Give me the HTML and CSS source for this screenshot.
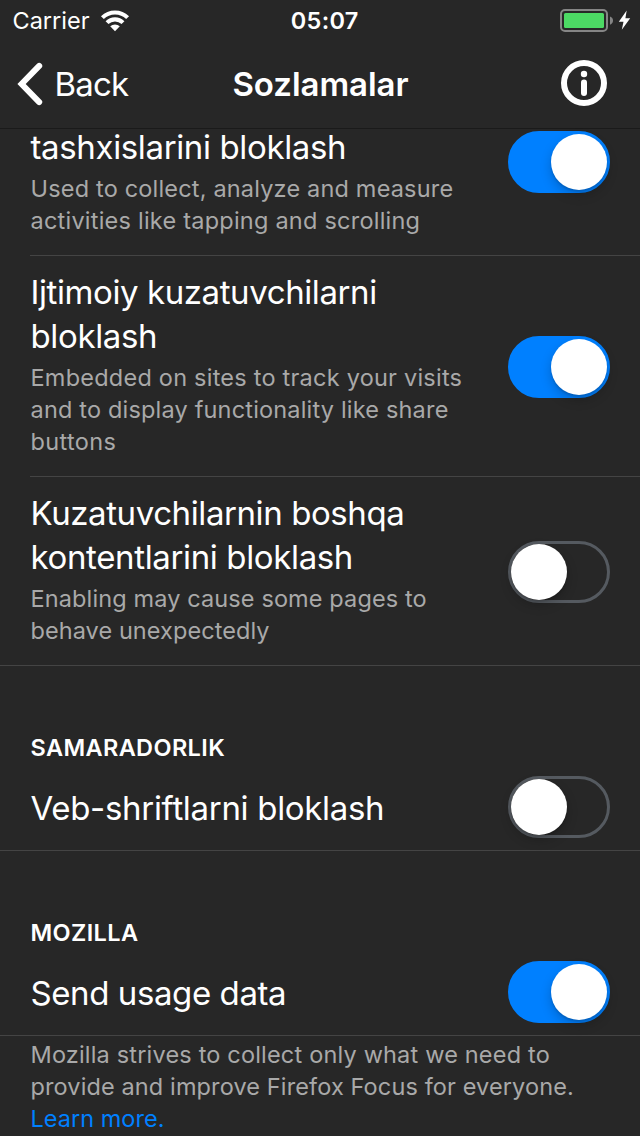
FILE: index.html
```html
<!DOCTYPE html>
<html lang="uz">
<head>
<meta charset="utf-8">
<title>Sozlamalar</title>
<link rel="stylesheet" href="styles.css">
</head>
<body>
<div class="screen">
  <header class="header">
    <div class="status">
      <div class="carrier">
        <span>Carrier</span>
        <svg class="wifi" width="30" height="22" viewBox="0 0 30 22">
          <g fill="none" stroke="#fff" stroke-width="4.1">
            <path d="M2.4 7.6A18 18 0 0 1 27.6 7.6"/>
            <path d="M7 12.6A11.5 11.5 0 0 1 23 12.6"/>
          </g>
          <path d="M10.2 16.3a7 7 0 0 1 9.6 0L15 21.3z" fill="#fff"/>
        </svg>
      </div>
      <span class="time">05:07</span>
      <svg class="battery" width="72" height="24" viewBox="0 0 72 24">
        <rect x="1" y="1" width="46" height="21" rx="4" fill="none" stroke="#858585" stroke-width="2"/>
        <rect x="4" y="4" width="40" height="15" rx="1.5" fill="#4cd964"/>
        <path d="M50 7.5c4 1.2 4 7 0 8.2z" fill="#858585"/>
        <path d="M66.7 1.5L58.8 12.8h4.7L61.8 20.7 70.2 9.2h-4.8z" fill="#fff"/>
      </svg>
    </div>
    <nav class="nav">
      <div class="back">
        <svg width="27" height="44" viewBox="0 0 27 44">
          <path d="M23.2 3.9L5.6 22l17.6 18.1" fill="none" stroke="#fff" stroke-width="6" stroke-linecap="round" stroke-linejoin="miter"/>
        </svg>
        <span class="back-label">Back</span>
      </div>
      <h1 class="nav-title">Sozlamalar</h1>
      <svg class="info" width="48" height="48" viewBox="0 0 48 48">
        <circle cx="24" cy="24" r="20" fill="none" stroke="#fff" stroke-width="6"/>
        <circle cx="24" cy="15" r="3.2" fill="#fff"/>
        <rect x="21" y="20.6" width="6" height="16.4" rx="3" fill="#fff"/>
      </svg>
    </nav>
  </header>

  <main class="list">
    <section class="row row-first">
      <div class="text">
        <div class="title">tashxislarini bloklash</div>
        <div class="sub">Used to collect, analyze and measure<br><span class="wide">activities like tapping and scrolling</span></div>
      </div>
      <div class="switch on"><i class="knob"></i></div>
    </section>
    <section class="row">
      <div class="text">
        <div class="title"><span class="narrow">Ijtimoiy kuzatuvchilarni</span><br>bloklash</div>
        <div class="sub"><span class="wide">Embedded on sites to track your visits</span><br>and to display functionality like share<br><span class="wider">buttons</span></div>
      </div>
      <div class="switch on"><i class="knob"></i></div>
    </section>
    <section class="row row-last">
      <div class="text">
        <div class="title"><span class="narrow">Kuzatuvchilarnin boshqa</span><br>kontentlarini bloklash</div>
        <div class="sub"><span class="snug">Enabling may cause some pages to</span><br><span class="tight">behave unexpectedly</span></div>
      </div>
      <div class="switch"><i class="knob"></i></div>
    </section>

    <h2 class="heading">SAMARADORLIK</h2>
    <section class="row row-single">
      <div class="text"><div class="title">Veb-shriftlarni bloklash</div></div>
      <div class="switch"><i class="knob"></i></div>
    </section>

    <h2 class="heading">MOZILLA</h2>
    <section class="row row-single">
      <div class="text"><div class="title"><span class="narrow">Send usage data</span></div></div>
      <div class="switch on"><i class="knob"></i></div>
    </section>
    <p class="sub footer">Mozilla strives to collect only what we need to<br><span class="snug">provide and improve Firefox Focus for everyone.</span><br><a class="link">Learn more.</a></p>
  </main>
</div>
</body>
</html>
```
FILE: styles.css
```css
* { box-sizing: border-box; }
body {
  margin: 0;
  background: #272727;
  color: #fff;
  font-family: Inter, "Noto Sans", sans-serif;
}
.screen {
  width: 640px;
  height: 1136px;
  overflow: hidden;
  display: flex;
  flex-direction: column;
}
.header {
  height: 129px;
  flex: none;
  border-bottom: 1px solid #1a1a1a;
}
.status {
  height: 41px;
  display: grid;
  grid-template-columns: 1fr auto 1fr;
  align-items: center;
  padding: 1px 8px 0 12.5px;
  font-size: 23.5px;
  line-height: 40px;
}
.carrier { display: flex; align-items: center; gap: 10px; }
.wifi { margin-top: -1px; }
.time { font-weight: 600; letter-spacing: .3px; margin-left: 4px; margin-right: -1px; }
.battery { justify-self: end; margin-top: -1px; }
.nav {
  height: 86px;
  display: grid;
  grid-template-columns: 1fr auto 1fr;
  align-items: center;
  padding: 0 32px 0 16px;
}
.back { display: flex; align-items: center; gap: 11.5px; }
.back-label { font-size: 33px; line-height: 44px; letter-spacing: -.8px; }
.nav-title {
  margin: 0 -8.5px 0 8.5px;
  font-size: 33px;
  line-height: 44px;
  font-weight: 600;
  letter-spacing: -.05px;
}
.info { justify-self: end; margin-top: -2px; }
.list { flex: 1; }
.row {
  display: flex;
  align-items: center;
  justify-content: space-between;
  margin-left: 30px;
  padding: 14px 30px 18px 0;
  border-bottom: 1px solid #444;
}
.text { margin-left: .5px; }
.row-first {
  height: 127px;
  align-items: flex-start;
  padding-top: 0;
}
.row-first .text { margin-top: -4px; }
.row-last { margin-left: 0; padding-left: 30px; }
.row-single {
  height: 89px;
  margin-left: 0;
  padding: 0 30px;
}
.row-single .text { padding-top: 4px; }
.title {
  font-size: 33px;
  line-height: 44px;
  letter-spacing: -.36px;
  white-space: nowrap;
}
.row-single .title { letter-spacing: -.31px; }
.title .narrow { letter-spacing: -.41px; }
.sub {
  margin: 4px 0 0;
  font-size: 23.5px;
  line-height: 32px;
  letter-spacing: .18px;
  color: #a9a9a9;
  white-space: nowrap;
}
.wide { letter-spacing: .23px; }
.wider { letter-spacing: .36px; }
.snug { letter-spacing: .12px; }
.tight { letter-spacing: .07px; }
.heading {
  height: 96px;
  margin: 0;
  padding: 68px 30.5px 0;
  font-size: 23.5px;
  line-height: 28px;
  font-weight: 600;
  letter-spacing: .38px;
}
.footer { margin-top: 3px; padding: 0 30.5px; }
.link { color: #0080ff; letter-spacing: .02px; }
.switch {
  flex: none;
  display: flex;
  width: 102px;
  height: 62px;
  margin-top: 4px;
  border: 3px solid #555a60;
  border-radius: 31px;
  position: relative;
  top: 1px;
}
.row-first .switch { margin-top: 1px; }
.row-single .switch { margin-top: 0; }
.switch.on { background: #0080ff; border-color: #0080ff; justify-content: flex-end; }
.knob {
  width: 56px;
  height: 56px;
  border-radius: 50%;
  background: #fff;
  box-shadow: 0 5px 12px rgba(0, 0, 0, .2), 0 2px 2px rgba(0, 0, 0, .12);
}
```
